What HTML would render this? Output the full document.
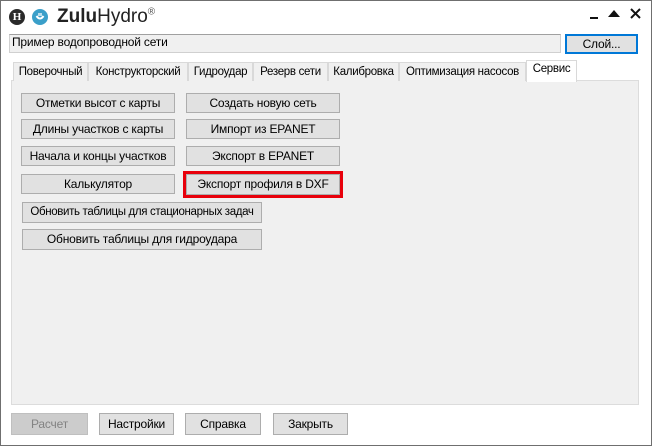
<html><head><style>
body{margin:0;width:652px;height:446px;background:#fff;font-family:"Liberation Sans",sans-serif;font-size:12px;position:relative;overflow:hidden}
.win{position:absolute;left:0;top:0;width:650px;height:444px;border:1px solid #6f6f6f;background:#fff}
.a{position:absolute;box-sizing:border-box;white-space:nowrap}
.b{position:absolute;box-sizing:border-box;background:#e1e1e1;border:1px solid #adadad;text-align:center;color:#000;font-size:12px;line-height:18px;white-space:nowrap;letter-spacing:-0.2px;overflow:hidden}
.tab{position:absolute;top:62px;height:19px;box-sizing:border-box;border:1px solid #d9d9d9;border-bottom:none;background:#f0f0f0;text-align:center;line-height:18px;font-size:11.5px;letter-spacing:-0.3px;white-space:nowrap;overflow:hidden}
</style></head><body><div class="win"></div>
<div class="a" style="left:9px;top:9px;width:16px;height:16px;border-radius:50%;background:#2a2a2a;color:#fff;font:bold 11px 'Liberation Serif',serif;text-align:center;line-height:16px">H</div>
<div class="a" style="left:32px;top:9px;width:16px;height:16px;border-radius:50%;background:#3a9fc9"><svg width="16" height="16"><path d="M4.5 7 Q8 12 11.5 7" stroke="#fff" stroke-width="2" fill="none"/><path d="M7 4v3M9 4v3" stroke="#fff" stroke-width="1.3"/></svg></div>
<div class="a" style="left:57px;top:6px;font-size:19px;color:#222"><b>Zulu</b>Hydro<sup style="font-size:10px;color:#555">®</sup></div>
<div class="a" style="left:590px;top:17px;width:8px;height:2px;background:#111"></div>
<svg class="a" style="left:608px;top:9px" width="12" height="9"><path d="M0 8L6 1L12 8Z" fill="#111"/></svg>
<svg class="a" style="left:630px;top:8px" width="11" height="11"><path d="M1 1L10 10M10 1L1 10" stroke="#111" stroke-width="2"/></svg>
<div class="a" style="left:9px;top:34px;width:552px;height:19px;background:#f0f0f0;border:1px solid #d0d0d0;border-top-color:#a0a0a0;padding-left:2px;line-height:15px;letter-spacing:-0.2px">Пример водопроводной сети</div>
<div class="b" style="left:565px;top:34px;width:73px;height:20px;border:2px solid #0078d7;line-height:16px">Слой...</div>
<div class="a" style="left:11px;top:80px;width:628px;height:325px;background:#f0f0f0;border:1px solid #dcdcdc"></div>
<div class="tab" style="left:13px;width:75px">Поверочный</div>
<div class="tab" style="left:88px;width:100px">Конструкторский</div>
<div class="tab" style="left:188px;width:65px">Гидроудар</div>
<div class="tab" style="left:253px;width:75px">Резерв сети</div>
<div class="tab" style="left:328px;width:71px">Калибровка</div>
<div class="tab" style="left:399px;width:127px">Оптимизация насосов</div>
<div class="tab" style="left:526px;top:60px;width:51px;height:22px;background:#fff;line-height:16px">Сервис</div>
<div class="b" style="left:21px;top:93px;width:154px;height:20px">Отметки высот с карты</div>
<div class="b" style="left:186px;top:93px;width:154px;height:20px">Создать новую сеть</div>
<div class="b" style="left:21px;top:119px;width:154px;height:20px">Длины участков с карты</div>
<div class="b" style="left:186px;top:119px;width:154px;height:20px">Импорт из EPANET</div>
<div class="b" style="left:21px;top:146px;width:154px;height:20px">Начала и концы участков</div>
<div class="b" style="left:186px;top:146px;width:154px;height:20px">Экспорт в EPANET</div>
<div class="b" style="left:21px;top:174px;width:154px;height:20px">Калькулятор</div>
<div class="a" style="left:183px;top:171px;width:160px;height:27px;border:3px solid #e8000b"></div>
<div class="b" style="left:186px;top:174px;width:154px;height:21px">Экспорт профиля в DXF</div>
<div class="b" style="left:22px;top:202px;width:240px;height:21px;font-size:11.5px;letter-spacing:-0.35px">Обновить таблицы для стационарных задач</div>
<div class="b" style="left:22px;top:229px;width:240px;height:21px">Обновить таблицы для гидроудара</div>
<div class="b" style="left:11px;top:413px;width:77px;height:22px;background:#ccc;border-color:#bfbfbf;color:#838383;line-height:20px">Расчет</div>
<div class="b" style="left:99px;top:413px;width:75px;height:22px;line-height:20px">Настройки</div>
<div class="b" style="left:185px;top:413px;width:76px;height:22px;line-height:20px">Справка</div>
<div class="b" style="left:273px;top:413px;width:75px;height:22px;line-height:20px">Закрыть</div>
</body></html>
